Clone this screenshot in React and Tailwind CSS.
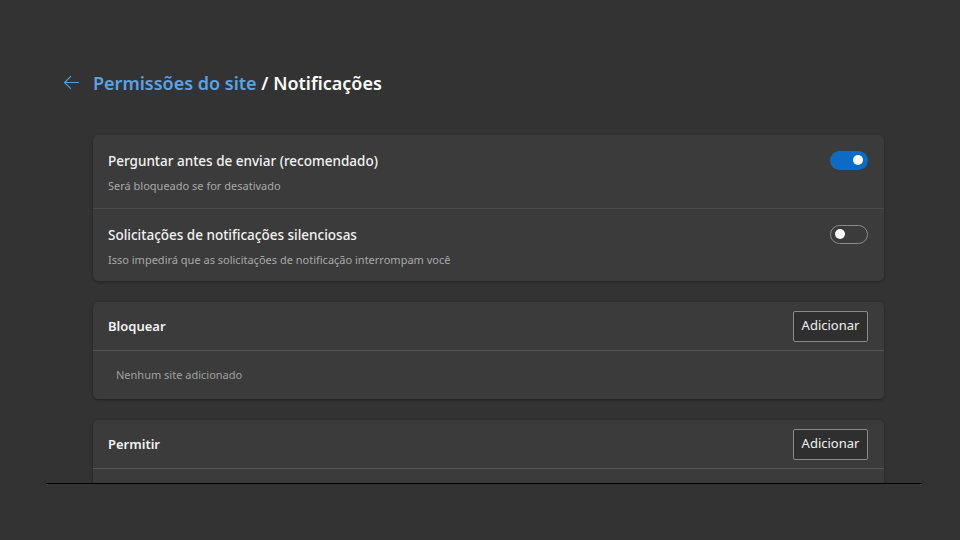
import React from 'react';

const font = { fontFamily: '"Noto Sans", "Open Sans", sans-serif' };

function Toggle({ on }) {
    return on ? (
        <div className="w-[38px] h-[19px] rounded-full bg-[#0a6cc4] flex items-center justify-end pr-[5px]">
            <div className="w-[10px] h-[10px] rounded-full bg-white" />
        </div>
    ) : (
        <div className="w-[38px] h-[19px] rounded-full border border-[#8a8a8a] flex items-center pl-[4px]">
            <div className="w-[10px] h-[10px] rounded-full bg-white" />
        </div>
    );
}

function ToggleRow({ title, desc, on, border }) {
    return (
        <div className={`flex items-start justify-between pl-[15px] pr-[16px] pt-[17px] h-[73px] ${border ? 'border-t border-[#4a4a4a]' : ''}`}>
            <div className="flex flex-col gap-[9px]">
                <div className="text-[13.5px] font-medium text-[#f2f2f2] leading-[18px]">{title}</div>
                <div className="text-[11px] text-[#a8a8a8] leading-[14px]">{desc}</div>
            </div>
            <div className="mt-[-1.5px]">
                <Toggle on={on} />
            </div>
        </div>
    );
}

function ListCard({ title, children }) {
    return (
        <div className="bg-[#3b3b3b] rounded-[5px] shadow-[0_1px_3px_rgba(0,0,0,0.35)]">
            <div className="flex items-center justify-between pl-[15px] pr-[16px] h-[49px] pt-[2px] border-b border-[#555]">
                <div className="text-[13px] font-semibold text-[#f2f2f2]">{title}</div>
                <button className="w-[75px] h-[31px] mt-[-2px] border border-[#8a8a8a] rounded-[2px] bg-[#2f2f2f] text-[13px] text-[#f0f0f0]">
                    Adicionar
                </button>
            </div>
            {children}
        </div>
    );
}

export default function App() {
    return (
        <div className="w-[960px] h-[540px] bg-[#333333] overflow-hidden" style={font}>
            <div className="ml-[46px] w-[876px] h-[484px] overflow-hidden border-b border-black">
                <div className="flex items-center h-[32px] mt-[66px] ml-[17px]">
                    <svg width="17" height="17" viewBox="0 0 16 16" fill="none" stroke="#4f9ee3" strokeWidth="1.1">
                        <path d="M15 8H1.5M7.5 2L1.5 8l6 6" />
                    </svg>
                    <div className="ml-[13px] text-[18px] font-semibold leading-none mt-[2px]">
                        <span className="text-[#5aa2e4]">Permissões do site</span>
                        <span className="text-white"> / Notificações</span>
                    </div>
                </div>
                <div className="ml-[47px] w-[791px] mt-[37px] flex flex-col gap-[21px]">
                    <div className="bg-[#3b3b3b] rounded-[5px] shadow-[0_1px_3px_rgba(0,0,0,0.35)]">
                        <ToggleRow
                            title="Perguntar antes de enviar (recomendado)"
                            desc="Será bloqueado se for desativado"
                            on
                        />
                        <ToggleRow
                            title="Solicitações de notificações silenciosas"
                            desc="Isso impedirá que as solicitações de notificação interrompam você"
                            border
                        />
                    </div>
                    <ListCard title="Bloquear">
                        <div className="h-[48px] flex items-center pl-[23px] text-[11px] text-[#a0a0a0]">
                            Nenhum site adicionado
                        </div>
                    </ListCard>
                    <ListCard title="Permitir">
                        <div className="h-[48px]" />
                    </ListCard>
                </div>
            </div>
        </div>
    );
}
